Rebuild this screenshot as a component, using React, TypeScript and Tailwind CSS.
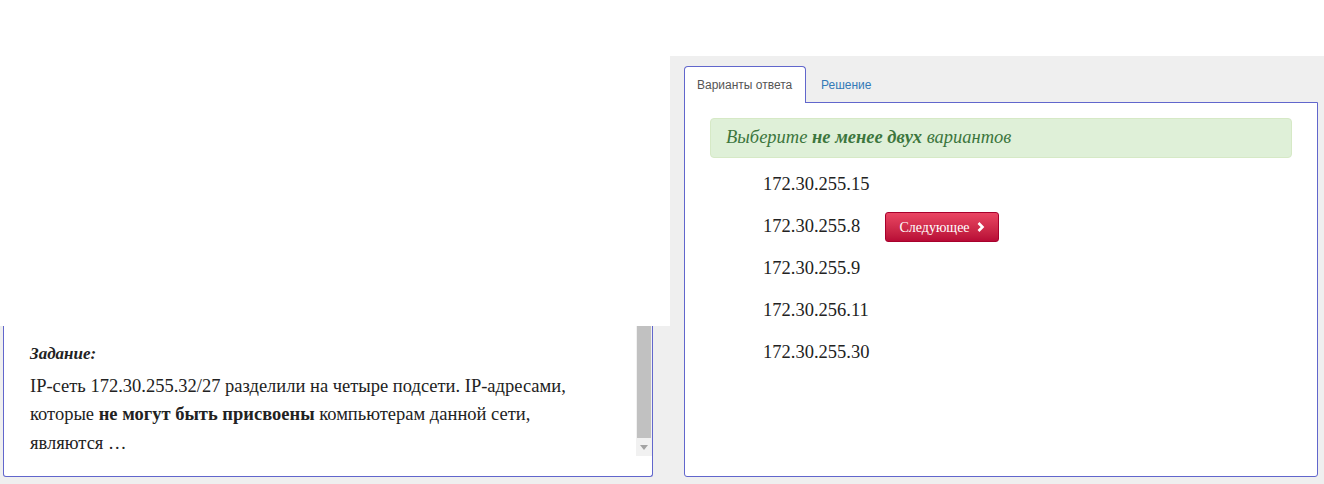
export default function App() {
  const serif = { fontFamily: '"Liberation Serif", "Times New Roman", serif' };
  const sans = { fontFamily: '"Liberation Sans", Arial, sans-serif' };
  const options = ["172.30.255.15", "172.30.255.8", "172.30.255.9", "172.30.256.11", "172.30.255.30"];
  return (
    <div className="w-[1324px] h-[484px] bg-white overflow-hidden">
      <div className="h-[56px]" />
      <div className="flex h-[428px] bg-[#efefef]">
        <div className="w-[670px] flex flex-col shrink-0">
          <div className="h-[270px] bg-white" />
          <div className="ml-[3px] w-[650px] h-[151px] border-x border-b border-[#6166cc] rounded-b-[3px] bg-white flex pb-[20px]">
            <div className="flex-1 pl-[26px] pt-[14px] text-[18.5px] leading-[28.5px] text-[#222]" style={serif}>
              <div className="font-bold italic text-[17px]">Задание:</div>
              <div className="mt-[3px] pr-[40px]">
                IP-сеть 172.30.255.32/27 разделили на четыре подсети. IP-адресами, которые{" "}
                <b>не могут быть присвоены</b> компьютерам данной сети, являются …
              </div>
            </div>
            <div className="w-[16px] bg-[#f1f1f1] flex flex-col">
              <div className="flex-1 bg-[#c1c1c1] mx-[1px]" />
              <div className="h-[18px] flex items-center justify-center">
                <svg width="8" height="5" viewBox="0 0 8 5">
                  <path d="M0 0 L8 0 L4 5 Z" fill="#a3a3a3" />
                </svg>
              </div>
            </div>
          </div>
        </div>
        <div className="flex-1 pl-[14px] pr-[6px] pt-[10px] flex flex-col">
          <div className="flex h-[37px] text-[12px]" style={sans}>
            <div className="w-[122px] h-[37px] border-x border-t border-[#6166cc] rounded-t-[4px] bg-white flex items-center pl-[12px] text-[#555] relative z-10">
              Варианты ответа
            </div>
            <div className="h-[37px] flex items-center pl-[15px] text-[#337ab7]">Решение</div>
          </div>
          <div className="-mt-px h-[375px] border border-[#6166cc] rounded-b-[3px] bg-white px-[25px] pt-[15px]">
            <div
              className="h-[40px] bg-[#dff0d8] border border-[#d6e9c6] rounded-[4px] flex items-center pl-[15px] text-[18.5px] italic text-[#3c763d]"
              style={serif}
            >
              Выберите&nbsp;<b>не менее двух</b>&nbsp;вариантов
            </div>
            <div className="mt-[6px] pl-[53px] text-[18.5px] text-[#222]" style={serif}>
              {options.map((o, i) => (
                <div key={o} className="h-[42px] flex items-center">
                  <span className="w-[122px]">{o}</span>
                  {i === 1 && (
                    <button
                      className="h-[30px] w-[114px] rounded-[3px] border border-[#a8002c] bg-gradient-to-b from-[#ea4563] to-[#b80a36] text-white text-[14px] flex items-center justify-center gap-[7px]"
                      style={serif}
                    >
                      Следующее
                      <svg width="8" height="10" viewBox="0 0 8 10">
                        <path d="M1.5 1 L5.5 5 L1.5 9" stroke="white" strokeWidth="2.6" fill="none" />
                      </svg>
                    </button>
                  )}
                </div>
              ))}
            </div>
          </div>
        </div>
      </div>
    </div>
  );
}
